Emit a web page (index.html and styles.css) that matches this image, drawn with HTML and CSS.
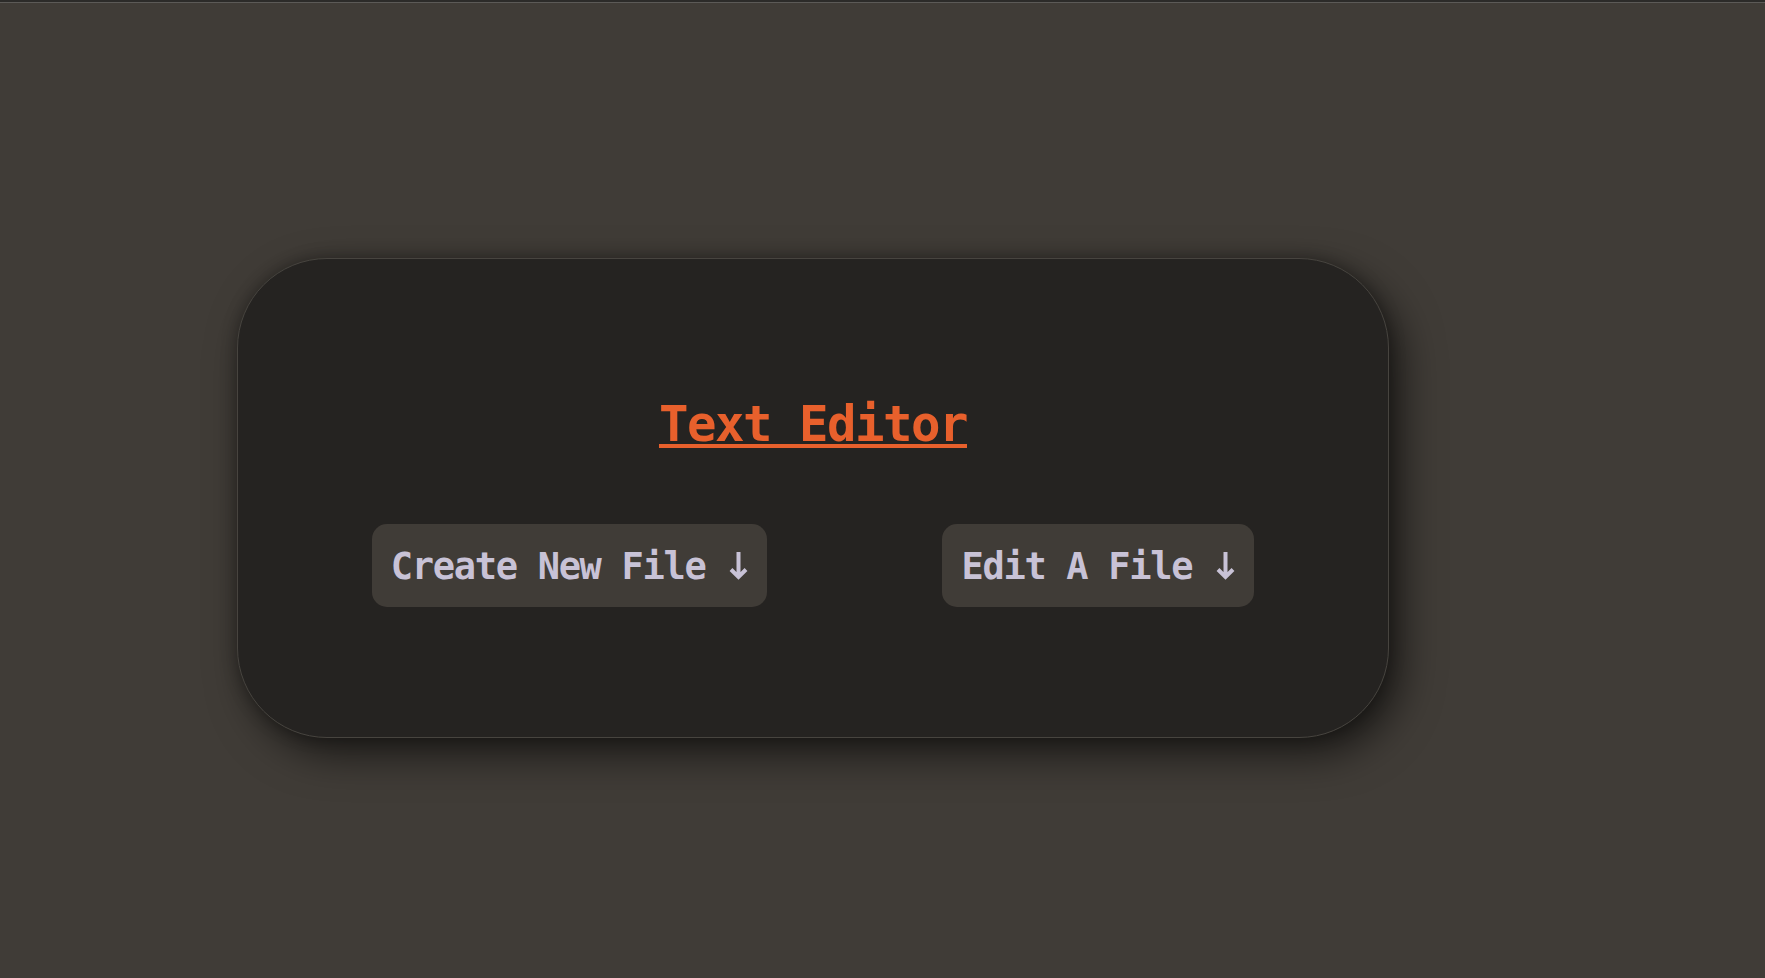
FILE: index.html
```html
<!DOCTYPE html>
<html lang="en">
<head>
<meta charset="utf-8">
<title>Text Editor</title>
<link rel="stylesheet" href="styles.css">
</head>
<body>
<div class="topbar"></div>
<main class="stage">
  <section class="card">
    <h1 class="title"><a href="#" class="title-link">Text Editor</a></h1>
    <div class="actions">
      <button class="btn" type="button">Create New File <svg class="arrow" viewBox="0 0 22 28" aria-hidden="true"><path d="M12.5 0V25M5 17.5L12.5 25L20 17.5"/></svg></button>
      <button class="btn" type="button">Edit A File <svg class="arrow" viewBox="0 0 22 28" aria-hidden="true"><path d="M12.5 0V25M5 17.5L12.5 25L20 17.5"/></svg></button>
    </div>
  </section>
</main>
</body>
</html>
```
FILE: styles.css
```css
* { box-sizing: border-box; }
html, body {
  margin: 0;
  padding: 0;
  height: 100%;
  background: #403c37;
  font-family: "DejaVu Sans Mono", "Liberation Mono", monospace;
  overflow: hidden;
}
.topbar {
  height: 3px;
  background: #2c2b29;
  border-bottom: 1px solid #5c5a57;
}
.stage {
  padding: 255px 0 0 237px;
}
.card {
  width: 1152px;
  height: 480px;
  background: #252321;
  border: 1px solid #47443f;
  border-radius: 90px;
  box-shadow: 12px 16px 40px rgba(0, 0, 0, 0.6), 0 0 16px rgba(0, 0, 0, 0.3);
  padding-top: 139px;
  display: flex;
  flex-direction: column;
  align-items: center;
}
.title {
  margin: 0;
  font-size: 49px;
  font-weight: bold;
  letter-spacing: -1.5px;
  line-height: 54px;
}
.title-link {
  color: #e8602c;
  text-decoration: underline;
  text-decoration-thickness: 4px;
  text-underline-offset: 3px;
}
.actions {
  margin-top: 72px;
  display: flex;
  gap: 175px;
}
.btn {
  font-family: inherit;
  font-size: 37px;
  font-weight: bold;
  letter-spacing: -1.3px;
  line-height: 41px;
  color: #c8c2d6;
  background: #403c37;
  border: none;
  border-radius: 15px;
  padding: 22px 19px 20px 19px;
  cursor: pointer;
}
.arrow {
  width: 22px;
  height: 28px;
  vertical-align: baseline;
  margin-bottom: -1px;
  fill: none;
  stroke: currentColor;
  stroke-width: 4;
}
```
